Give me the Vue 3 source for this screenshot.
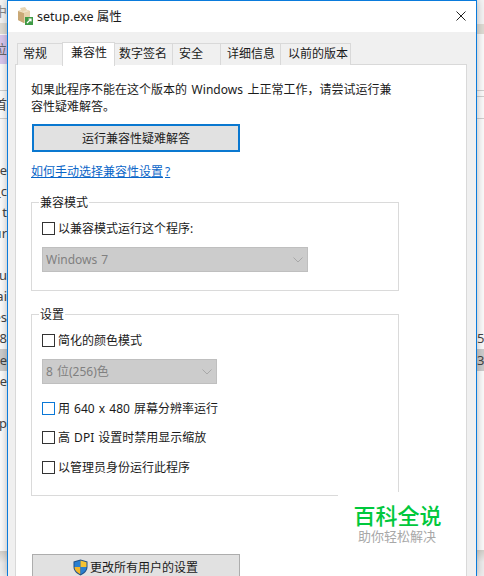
<script setup>
const leftRows = [
  { h: 23, t: '中', c: 'top' },
  { h: 11, t: '', c: 'band' },
  { h: 1, t: '', c: 'blank' },
  { h: 29, t: '位', c: 'purple' },
  { h: 26, t: '', c: 'blank' },
  { h: 1, t: '', c: 'rule' },
  { h: 27, t: '首', c: 'blank' },
  { h: 1, t: '', c: 'rule' },
  { h: 41, t: '', c: 'blank' },
  { h: 21, t: '_e', c: 'blank' },
  { h: 21, t: '_c', c: 'blank' },
  { h: 21, t: 't', c: 'blank' },
  { h: 21, t: 'ur', c: 'blank' },
  { h: 21, t: '', c: 'blank' },
  { h: 21, t: 'u', c: 'blank' },
  { h: 21, t: 'ai', c: 'blank' },
  { h: 21, t: 'es', c: 'blank' },
  { h: 21, t: 'r8', c: 'blank' },
  { h: 22, t: '.e', c: 'sel' },
  { h: 21, t: '.e', c: 'blank' },
  { h: 21, t: '', c: 'blank' },
  { h: 21, t: 'p', c: 'blank' },
  { h: 117, t: '', c: 'blank' },
  { h: 26, t: '', c: 'foot' }
]
const rightRows = [
  { h: 24, t: '', c: 'top' },
  { h: 10, t: '', c: 'band' },
  { h: 56, t: '', c: 'blank' },
  { h: 1, t: '', c: 'rule' },
  { h: 5, t: '', c: 'blank' },
  { h: 1, t: '', c: 'rule' },
  { h: 21, t: '', c: 'blank' },
  { h: 1, t: '', c: 'rule' },
  { h: 209, t: '', c: 'blank' },
  { h: 21, t: '5', c: 'blank' },
  { h: 22, t: '3', c: 'sel' },
  { h: 179, t: '', c: 'blank' },
  { h: 26, t: '', c: 'foot' }
]
const tabs = [
  { t: '常规', w: 46, p: 5 },
  { t: '兼容性', w: 53, p: 8, active: true },
  { t: '数字签名', w: 59, p: 4 },
  { t: '安全', w: 49, p: 6 },
  { t: '详细信息', w: 61, p: 6 },
  { t: '以前的版本', w: 71, p: 7 }
]
</script>

<template>
  <div class="page">
    <div class="sliver left">
      <div v-for="(r, i) in leftRows" :key="i" class="row" :class="r.c" :style="{ height: r.h + 'px' }"><span>{{ r.t }}</span></div>
    </div>

    <div class="window">
      <div class="titlebar">
        <svg class="appicon" width="16" height="18" viewBox="0 0 16 18">
          <path d="M1 4 L7 2 L13 4 L13 13 L7 16 L1 13 Z" fill="#d9bd90" />
          <path d="M1 4 L7 6 L7 16 L1 13 Z" fill="#c9a876" />
          <path d="M7 6 L13 4 L13 13 L7 16 Z" fill="#e6d2ad" />
          <path d="M1 4 L7 2 L13 4 L7 6 Z" fill="#f0e2c6" />
          <path d="M3 1 L8 0 L10 3 L5 5 Z" fill="#e8d5b2" />
          <rect x="8" y="10" width="8" height="8" fill="#3f9a45" />
          <path d="M10 16 L14 12 M11.5 12 H14 V14.5" stroke="#fff" stroke-width="1.2" fill="none" />
        </svg>
        <span class="title">setup.exe 属性</span>
        <svg class="close" width="10" height="10" viewBox="0 0 10 10">
          <path d="M0.5 0.5 L9.5 9.5 M9.5 0.5 L0.5 9.5" stroke="#222" stroke-width="1" fill="none" />
        </svg>
      </div>

      <div class="body">
        <div class="tabs">
          <div
            v-for="tab in tabs"
            :key="tab.t"
            class="tab"
            :class="{ active: tab.active }"
            :style="{ width: tab.w + 'px', paddingLeft: tab.p + 'px' }"
          >{{ tab.t }}</div>
        </div>

        <div class="panel">
          <p class="intro">如果此程序不能在这个版本的 Windows 上正常工作，请尝试运行兼<br />容性疑难解答。</p>
          <div class="btn focus">运行兼容性疑难解答</div>
          <a class="link">如何手动选择兼容性设置<span class="qmark">?</span></a>

          <div class="group first">
            <div class="legend">兼容模式</div>
            <label class="check tight"><i class="box"></i>以兼容模式运行这个程序:</label>
            <div class="select wide">
              <span>Windows 7</span>
              <svg width="10" height="6" viewBox="0 0 10 6"><path d="M0.5 0.5 L5 5 L9.5 0.5" stroke="#a8a8a8" fill="none" /></svg>
            </div>
          </div>

          <div class="group second">
            <div class="legend">设置</div>
            <label class="check tight"><i class="box"></i>简化的颜色模式</label>
            <div class="select narrow">
              <span>8 位(256)色</span>
              <svg width="10" height="6" viewBox="0 0 10 6"><path d="M0.5 0.5 L5 5 L9.5 0.5" stroke="#a8a8a8" fill="none" /></svg>
            </div>
            <label class="check opt1"><i class="box hover"></i>用 640 x 480 屏幕分辨率运行</label>
            <label class="check opt"><i class="box"></i>高 DPI 设置时禁用显示缩放</label>
            <label class="check opt last"><i class="box"></i>以管理员身份运行此程序</label>
          </div>

          <div class="btn plain">
            <svg width="15" height="17" viewBox="0 0 15 17">
              <path d="M7.5 0.5 L14.5 2.5 V8 C14.5 12 11 15 7.5 16.5 C4 15 0.5 12 0.5 8 V2.5 Z" fill="#1f4f86" />
              <path d="M7.5 1.5 V8 H1.5 V3.2 Z" fill="#2a7fd0" />
              <path d="M7.5 1.5 L13.5 3.2 V8 H7.5 Z" fill="#f6c332" />
              <path d="M1.5 8 H7.5 V15.3 C4.6 14 1.5 11.5 1.5 8 Z" fill="#f2b62a" />
              <path d="M7.5 8 H13.5 C13.5 11.5 10.4 14 7.5 15.3 Z" fill="#2a7fd0" />
            </svg>
            <span>更改所有用户的设置</span>
          </div>

          <div class="watermark">
            <div class="wm-main">百科全说</div>
            <div class="wm-sub">助你轻松解决</div>
          </div>
        </div>
      </div>
    </div>

    <div class="sliver right">
      <div v-for="(r, i) in rightRows" :key="i" class="row" :class="r.c" :style="{ height: r.h + 'px' }"><span>{{ r.t }}</span></div>
    </div>
  </div>
</template>

<style>
html, body { margin: 0; background: #fff; }
</style>

<style scoped>
.page {
  width: 484px;
  height: 576px;
  overflow: hidden;
  display: flex;
  font-family: "Noto Sans", "Noto Sans CJK SC", sans-serif;
  font-size: 12px;
  line-height: 17px;
  color: #1a1a1a;
  background: #fff;
}

/* background windows peeking out on both sides */
.sliver {
  width: 7px;
  flex: none;
  overflow: hidden;
  color: #444;
  font-size: 13px;
}
.row { display: flex; align-items: center; overflow: hidden; white-space: nowrap; }
.left .row { justify-content: flex-end; }
.row span { flex: none; }
.top { background: #f4f4f4; color: #888; }
.band { background: #dedbd3; }
.blank { background: #fbfbfb; }
.purple { background: #d9c6ec; color: #666; }
.rule { background: #cfcfcf; }
.sel { background: #cccccc; }
.foot { background: linear-gradient(#d3d0ca, #ededed 12px); }

.window {
  width: 470px;
  flex: none;
  box-sizing: border-box;
  border: 1px solid #0a7bdc;
  border-bottom: 0;
  display: flex;
  flex-direction: column;
  background: #f0f0f0;
  box-shadow: 0 0 8px rgba(0, 0, 0, 0.28);
  position: relative;
}

.titlebar {
  height: 31px;
  flex: none;
  background: #fff;
  display: flex;
  align-items: center;
  padding-left: 9px;
  padding-right: 10px;
}
.appicon { flex: none; margin-top: -1px; }
.title { margin-left: 4px; font-size: 12.5px; }
.close { margin-left: auto; margin-top: -1px; }

.body {
  flex: 1;
  min-height: 0;
  display: flex;
  flex-direction: column;
  padding: 11px 9px 0 7px;
}

.tabs { display: flex; align-items: flex-end; padding-left: 2px; height: 22px; flex: none; position: relative; z-index: 1; margin-bottom: -1px; }
.tab {
  box-sizing: border-box;
  height: 22px;
  border: 1px solid #d9d9d9;
  border-bottom: 0;
  margin-right: 0;
  margin-left: -1px;
  line-height: 20px;
  background: #f0f0f0;
}
.tab:first-child { margin-left: 0; }
.tab.active {
  background: #fff;
  height: 24px;
  margin-top: -2px;
  margin-bottom: -1px;
  line-height: 19px;
  position: relative;
  z-index: 2;
}

.panel {
  flex: 1;
  min-height: 0;
  box-sizing: border-box;
  background: #fff;
  border: 1px solid #d9d9d9;
  border-bottom: 0;
  padding: 16px 0 0 15px;
  position: relative;
  overflow: hidden;
}

.intro { margin: 0; word-spacing: 1.5px; }

.btn {
  box-sizing: border-box;
  width: 208px;
  height: 28px;
  margin-left: 1px;
  background: #e1e1e1;
  display: flex;
  align-items: center;
  justify-content: center;
}
.btn.focus { margin-top: 9px; border: 2px solid #0a78d0; }
.btn.plain { margin-top: 58px; border: 1px solid #adadad; gap: 2px; padding-right: 1px; padding-bottom: 2px; }
.btn.plain svg { flex: none; }

.link {
  display: block;
  width: fit-content;
  margin-top: 11px;
  color: #0a66c8;
  text-decoration: underline;
}
.qmark { padding-left: 2px; padding-right: 3px; }

.group {
  box-sizing: border-box;
  width: 368px;
  border: 1px solid #dadada;
  padding-left: 10px;
}
.group.first { margin-top: 22px; height: 89px; }
.group.second { margin-top: 23px; height: 182px; }
.legend {
  width: fit-content;
  margin: -9px 0 0 -3px;
  padding: 0 1px;
  background: #fff;
}

.check { display: flex; align-items: center; gap: 3px; height: 17px; word-spacing: 1px; }
.check.tight { margin-top: 9px; }
.check.opt1 { margin-top: 16px; }
.check.opt { margin-top: 12px; }
.check.opt.last { margin-top: 13px; }
.box {
  box-sizing: border-box;
  width: 13px;
  height: 13px;
  flex: none;
  border: 1px solid #333;
  background: #fff;
}
.box.hover { border-color: #0a78d7; }

.select {
  box-sizing: border-box;
  height: 25px;
  margin-top: 10px;
  background: #cccccc;
  border: 1px solid #bfbfbf;
  color: #808080;
  display: flex;
  align-items: center;
  justify-content: space-between;
  padding: 0 4px 0 3px;
  word-spacing: 1px;
}
.select.wide { width: 266px; }
.select.narrow { width: 175px; }

.watermark {
  position: absolute;
  right: 0;
  bottom: 0;
  width: 128px;
  height: 84px;
  background: #fff;
  text-align: center;
  box-sizing: border-box;
  padding: 10px 10px 0 0;
}
.wm-main { font-size: 22px; line-height: 26px; font-weight: 500; color: #00c83c; margin-left: 1px; }
.wm-sub { font-size: 13px; line-height: 16px; color: #a8a8a8; }
</style>
